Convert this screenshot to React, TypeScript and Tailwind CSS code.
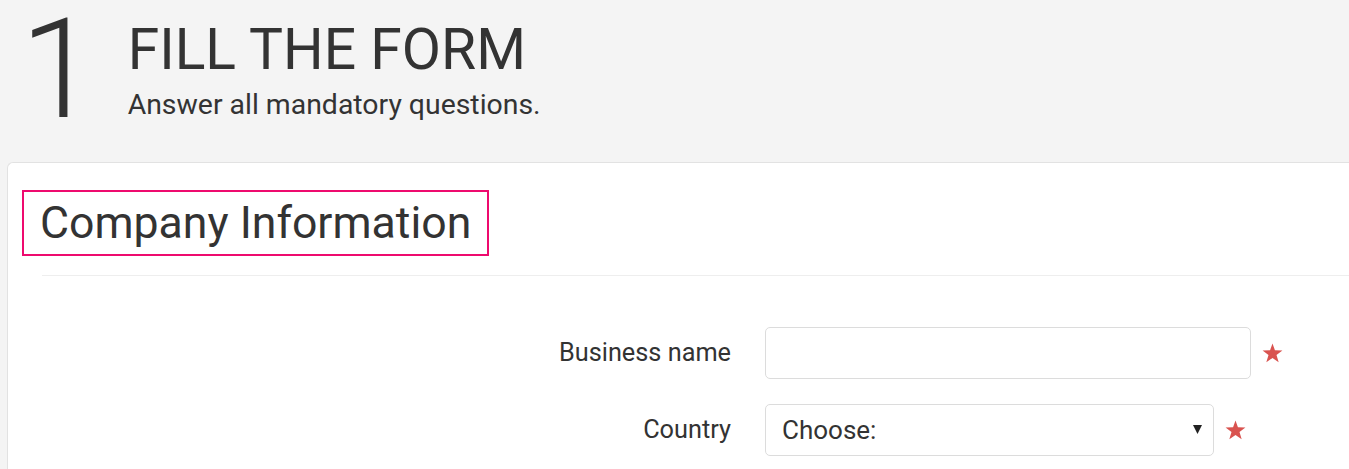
import { ChangeEvent, useState } from "react";

const Star = () => (
    <svg width="21" height="20" viewBox="0 0 24 23" className="shrink-0">
        <polygon
            points="12,0.5 14.8,8.4 23.4,8.6 16.6,13.8 19.1,22.2 12,17.2 4.9,22.2 7.4,13.8 0.6,8.6 9.2,8.4"
            fill="#d9534f"
        />
    </svg>
);

export default function App() {
    const [businessName, setBusinessName] = useState("");
    const [country, setCountry] = useState("");

    return (
        <div className="min-h-screen bg-[#f4f4f4] font-['Roboto','Liberation_Sans',sans-serif] text-[#333]">
            {/* step header */}
            <div className="flex items-start h-[162px] pl-[20px]">
                <span className="text-[140px] leading-[1.17] -mt-[12px] font-light">1</span>
                <div className="ml-[30px] pt-[21px] flex flex-col">
                    <h1 className="text-[57px] leading-none">FILL THE FORM</h1>
                    <p className="mt-[13px] text-[28.4px] leading-none">Answer all mandatory questions.</p>
                </div>
            </div>

            {/* form card */}
            <div className="ml-[7px] min-h-[307px] bg-white border-l border-t border-[#e2e2e2] rounded-tl-[6px] pt-[27px] pl-[14px]">
                <div className="inline-block border-2 border-[#ee0a6e] px-[16px]">
                    <h2 className="text-[44.6px] leading-[62px]">Company Information</h2>
                </div>
                <div className="ml-[20px] mt-[19px] h-px bg-[#eeeeee]" />

                <div className="-ml-[14px] mt-[51px] flex flex-col gap-[25px]">
                    <div className="flex items-center">
                        <label className="w-[723px] text-right text-[25.3px]">Business name</label>
                        <input
                            value={businessName}
                            onChange={(e: ChangeEvent<HTMLInputElement>) => setBusinessName(e.target.value)}
                            className="ml-[34px] w-[486px] h-[52px] rounded-[5px] border border-[#dcdcdc] px-4 text-[26px] outline-none"
                        />
                        <span className="ml-[11px]"><Star /></span>
                    </div>

                    <div className="flex items-center">
                        <label className="w-[723px] text-right text-[25.3px]">Country</label>
                        <div className="relative ml-[34px]">
                            <select
                                value={country}
                                onChange={(e: ChangeEvent<HTMLSelectElement>) => setCountry(e.target.value)}
                                className="appearance-none w-[449px] h-[52px] rounded-[5px] border border-[#dcdcdc] bg-white pl-[16px] text-[26px] text-[#333] outline-none"
                            >
                                <option value="">Choose:</option>
                                <option value="fr">France</option>
                                <option value="de">Germany</option>
                            </select>
                            <svg width="9" height="9" viewBox="0 0 9 9" className="absolute right-[12px] top-[21px] pointer-events-none">
                                <polygon points="0,0 9,0 4.5,9" fill="#222" />
                            </svg>
                        </div>
                        <span className="ml-[11px]"><Star /></span>
                    </div>
                </div>
            </div>
        </div>
    );
}
